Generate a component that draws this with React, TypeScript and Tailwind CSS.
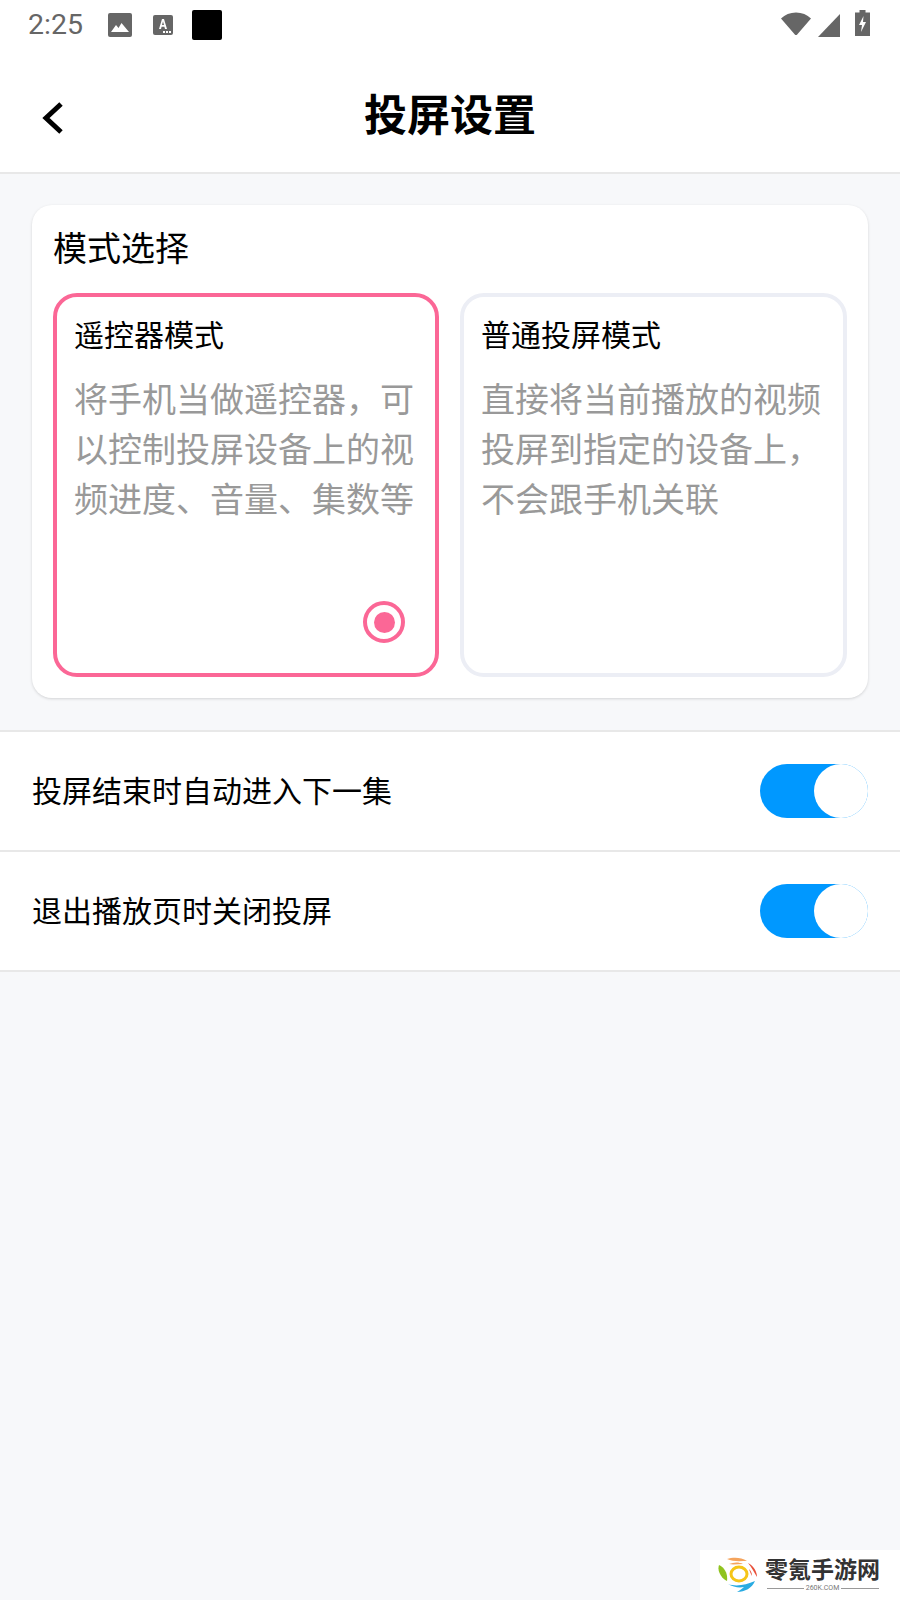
const cjk = "font-['Roboto','Noto_Sans_CJK_SC',sans-serif]";

const StatusBar = () => (
  <div className="h-[50px] flex items-center pl-[28px] pr-[30px] text-[#666666]">
    <span className="font-['Roboto',sans-serif] text-[28.500px] leading-none mr-[25px]">2:25</span>
    <svg width="24" height="24" viewBox="0 0 24 24" className="mr-[21px]">
      <rect width="24" height="24" rx="2" fill="#666666" />
      <path d="M3 19l5-7 2.500 3 3-5 7.500 9z" fill="#ffffff" />
    </svg>
    <svg width="20" height="20" viewBox="0 0 20 20" className="mr-[19px]">
      <rect width="20" height="20" rx="2" fill="#666666" />
      <path d="M6 14l3-10h2l3 10h-2l-.6-2.200H8.600L8 14zM9 10h2l-1-3.600z" fill="#ffffff" />
      <path d="M10 16h2v2h-2zM13 16h2v2h-2zM16 16h2v2h-2z" fill="#ffffff" />
    </svg>
    <div className="w-[30px] h-[30px] bg-black rounded-[2px]" />
    <div className="ml-auto flex items-center">
      <svg width="32" height="26" viewBox="0 0 32 26" className="mr-[5px] mb-[3px]">
        <path d="M1 7.500C5 3.500 10 1.500 16 1.500s11 2 15 6L17.200 23.500c-.6.800-1.800.800-2.400 0z" fill="#666666" />
      </svg>
      <svg width="24" height="24" viewBox="0 0 24 24" className="mr-[14px]">
        <path d="M23 1v23H1z" fill="#666666" />
      </svg>
      <svg width="15" height="26" viewBox="0 0 15 26" className="mb-[4px]">
        <path d="M4.500 0h6v2.500H15V26H0V2.500h4.500z" fill="#666666" />
        <path d="M8.500 6L4 15h3l-1 7 5-10H8z" fill="#ffffff" />
      </svg>
    </div>
  </div>
);

const ModeCard = ({ title, desc, active }: { title: string; desc: string[]; active?: boolean }) => (
  <div
    className={`relative h-[384px] rounded-[24px] border-[4px] px-[17px] pt-[19px] ${
      active ? "w-[386px] shrink-0 border-[#fb6796]" : "flex-1 border-[#eceef5]"
    }`}
  >
    <div className="text-[30px] leading-[40px] text-black">{title}</div>
    <div className="mt-[19px] text-[34px] leading-[50px] text-[#999999]">
      {desc.map((line) => (
        <div key={line} className="whitespace-nowrap">
          {line}
        </div>
      ))}
    </div>
    {active && (
      <div className="absolute right-[30px] bottom-[30px] w-[42px] h-[42px] rounded-full border-[4px] border-[#fb6796] flex items-center justify-center">
        <div className="w-[21px] h-[21px] rounded-full bg-[#fb6796]" />
      </div>
    )}
  </div>
);

const SettingRow = ({ label }: { label: string }) => (
  <div className="h-[120px] bg-white border-b-2 border-[#e8e8e8] pl-[32px] pr-[32px] flex items-center justify-between">
    <span className="text-[30px] text-black">{label}</span>
    <div className="w-[108px] h-[54px] rounded-full bg-[#0098ff] flex justify-end">
      <div className="w-[54px] h-[54px] rounded-full bg-white" />
    </div>
  </div>
);

export default function App() {
  return (
    <div className={`relative w-[900px] h-[1600px] overflow-hidden bg-[#f7f8fa] ${cjk}`}>
      <div className="bg-white border-b-2 border-[#e8e8e8]">
        <StatusBar />
        <div className="relative h-[122px] flex items-center justify-center">
          <svg width="28" height="36" viewBox="0 0 28 36" className="absolute left-[39px] top-[50px]">
            <path d="M22 4L7 18l15 14" fill="none" stroke="#000000" strokeWidth="5" />
          </svg>
          <h1 className="text-[43px] font-bold text-black leading-none mt-[10px]">投屏设置</h1>
        </div>
      </div>

      <div className="px-[32px] pt-[31px] pb-[32px]">
        <div className="bg-white rounded-[20px] shadow-[0_1px_3px_rgba(0,0,0,0.15)] px-[21px] pt-[23px] pb-[21px]">
          <div className="text-[34px] leading-[42px] text-black mb-[23px]">模式选择</div>
          <div className="flex gap-[21px]">
            <ModeCard
              active
              title="遥控器模式"
              desc={["将手机当做遥控器\uFF0C可", "以控制投屏设备上的视", "频进度、音量、集数等"]}
            />
            <ModeCard
              title="普通投屏模式"
              desc={["直接将当前播放的视频", "投屏到指定的设备上\uFF0C", "不会跟手机关联"]}
            />
          </div>
        </div>
      </div>

      <div className="border-t-2 border-[#e8e8e8]">
        <SettingRow label="投屏结束时自动进入下一集" />
        <SettingRow label="退出播放页时关闭投屏" />
      </div>

      <div className="absolute right-0 bottom-0 w-[200px] h-[50px] bg-white flex items-center pl-[18px]">
        <svg width="42" height="36" viewBox="0 0 42 36" className="shrink-0">
          <path d="M1 8c-2 6 2 13 8 16C10 17 7 11 1 8z" fill="#8fc31f" />
          <path d="M9 2c6-2 14-2 20 2-6 0-14 1-20-2zM11 7c5-2 10-2 14 0-5 0-10 1-14 0z" fill="#f5a45d" />
          <path d="M30 6c6 3 9 9 9 14-3-5-5-9-9-14zM31 12c2 2 3 4 3 7-1-2-2-4-3-7z" fill="#e8503a" />
          <path d="M10 27c8 3 18 1 27-3-3 7-10 11-18 11 3-2 5-3 7-5-5 1-11 0-16-3z" fill="#29abe2" />
          <ellipse cx="21" cy="17" rx="8" ry="7" fill="none" stroke="#f5c518" strokeWidth="3" />
        </svg>
        <div className="ml-[5px] flex flex-col items-center">
          <span className="text-[23px] leading-[26px] font-bold text-[#333333] whitespace-nowrap">零氪手游网</span>
          <div className="flex items-center gap-[2px] w-[112px]">
            <div className="flex-1 h-px bg-[#999999]" />
            <span className="text-[7px] leading-[9px] text-[#777777]">260K.COM</span>
            <div className="flex-1 h-px bg-[#999999]" />
          </div>
        </div>
      </div>
    </div>
  );
}
